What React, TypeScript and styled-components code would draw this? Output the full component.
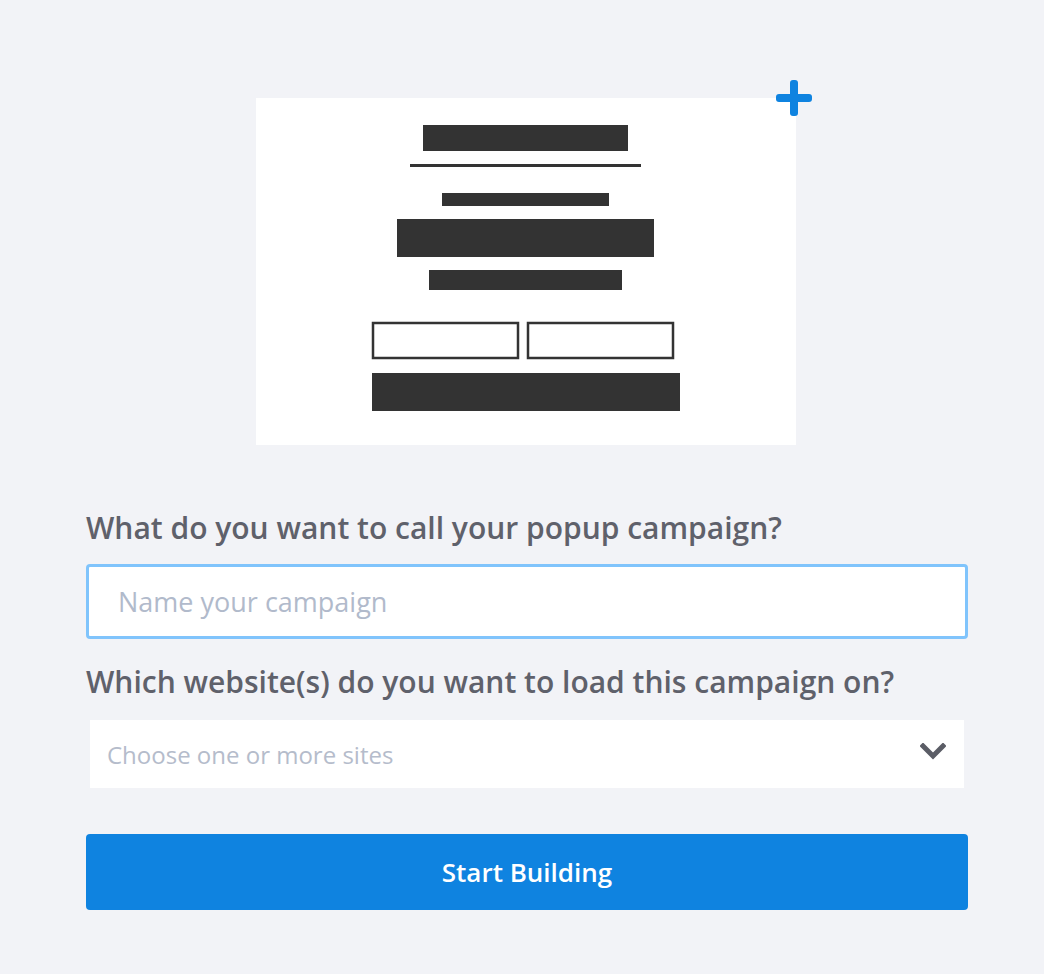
import React from "react";
import styled, { createGlobalStyle } from "styled-components";

const Global = createGlobalStyle`
  html, body { margin: 0; padding: 0; background: #f2f3f7; }
  body { font-family: "Open Sans", "Liberation Sans", sans-serif; }
  * { box-sizing: border-box; }
`;

const Page = styled.div`
  width: 1044px;
  min-height: 974px;
  background: #f2f3f7;
  display: flex;
  flex-direction: column;
  align-items: center;
  padding-top: 98px;
`;

const Preview = styled.div`
  position: relative;
  width: 540px;
  height: 347px;
  background: #ffffff;
  margin-left: 8px;
`;

const PlusBadge = styled.div`
  position: absolute;
  right: -17px;
  top: -19px;
  width: 38px;
  height: 38px;
  color: #0f83e0;
`;

const Form = styled.div`
  width: 882px;
  margin-top: 63px;
  margin-left: 10px;
  display: flex;
  flex-direction: column;
`;

const Label = styled.label`
  font-family: "Open Sans", sans-serif;
  font-weight: 600;
  font-size: 30px;
  line-height: 40px;
  color: #5f616b;
`;

const NameInput = styled.input`
  margin-top: 16px;
  height: 75px;
  width: 100%;
  border: 3px solid #80c4fc;
  border-radius: 4px;
  background: #ffffff;
  padding: 0 29px;
  font-family: "Open Sans", sans-serif;
  font-size: 27px;
  color: #333;
  outline: none;
  &::placeholder { color: #b1bacb; }
`;

const SecondLabel = styled(Label)`
  margin-top: 23px;
`;

const Select = styled.div`
  margin: 18px 4px 0 4px;
  height: 68px;
  background: #ffffff;
  display: flex;
  align-items: center;
  justify-content: space-between;
  padding: 0 18px 0 17px;
`;

const SelectPlaceholder = styled.span`
  font-family: "Open Sans", sans-serif;
  font-size: 24px;
  color: #b5bccb;
`;

const ChevronWrap = styled.span`
  display: flex;
  margin-bottom: 4px;
`;

const Button = styled.button`
  margin-top: 46px;
  height: 76px;
  width: 100%;
  border: none;
  border-radius: 4px;
  background: #0f83e0;
  color: #ffffff;
  font-family: "Open Sans", sans-serif;
  font-weight: 600;
  font-size: 26px;
  cursor: pointer;
`;

const Chevron = () => (
  <svg width="26" height="18" viewBox="0 0 26 18">
    <path d="M3 3 L13 13 L23 3" fill="none" stroke="#5b5d66" strokeWidth="5" strokeLinecap="square" />
  </svg>
);

const Plus = () => (
  <svg width="38" height="38" viewBox="0 0 38 38">
    <rect x="15" y="1" width="8" height="36" rx="3" fill="currentColor" />
    <rect x="1" y="15" width="36" height="8" rx="3" fill="currentColor" />
  </svg>
);

const PopupIllustration = () => (
  <svg width="540" height="347" viewBox="0 0 540 347">
    <rect x="167" y="27" width="205" height="26" fill="#333" />
    <rect x="154" y="66" width="231" height="3" fill="#333" />
    <rect x="186" y="95" width="167" height="13" fill="#333" />
    <rect x="141" y="121" width="257" height="38" fill="#333" />
    <rect x="173" y="172" width="193" height="20" fill="#333" />
    <rect x="117" y="225" width="145" height="35" fill="none" stroke="#333" strokeWidth="2.5" />
    <rect x="272" y="225" width="145" height="35" fill="none" stroke="#333" strokeWidth="2.5" />
    <rect x="116" y="275" width="308" height="38" fill="#333" />
  </svg>
);

export default function App() {
  return (
    <>
      <Global />
      <Page>
        <Preview>
          <PopupIllustration />
          <PlusBadge>
            <Plus />
          </PlusBadge>
        </Preview>
        <Form>
          <Label>What do you want to call your popup campaign?</Label>
          <NameInput placeholder="Name your campaign" />
          <SecondLabel>Which website(s) do you want to load this campaign on?</SecondLabel>
          <Select>
            <SelectPlaceholder>Choose one or more sites</SelectPlaceholder>
            <ChevronWrap>
              <Chevron />
            </ChevronWrap>
          </Select>
          <Button>Start Building</Button>
        </Form>
      </Page>
    </>
  );
}
